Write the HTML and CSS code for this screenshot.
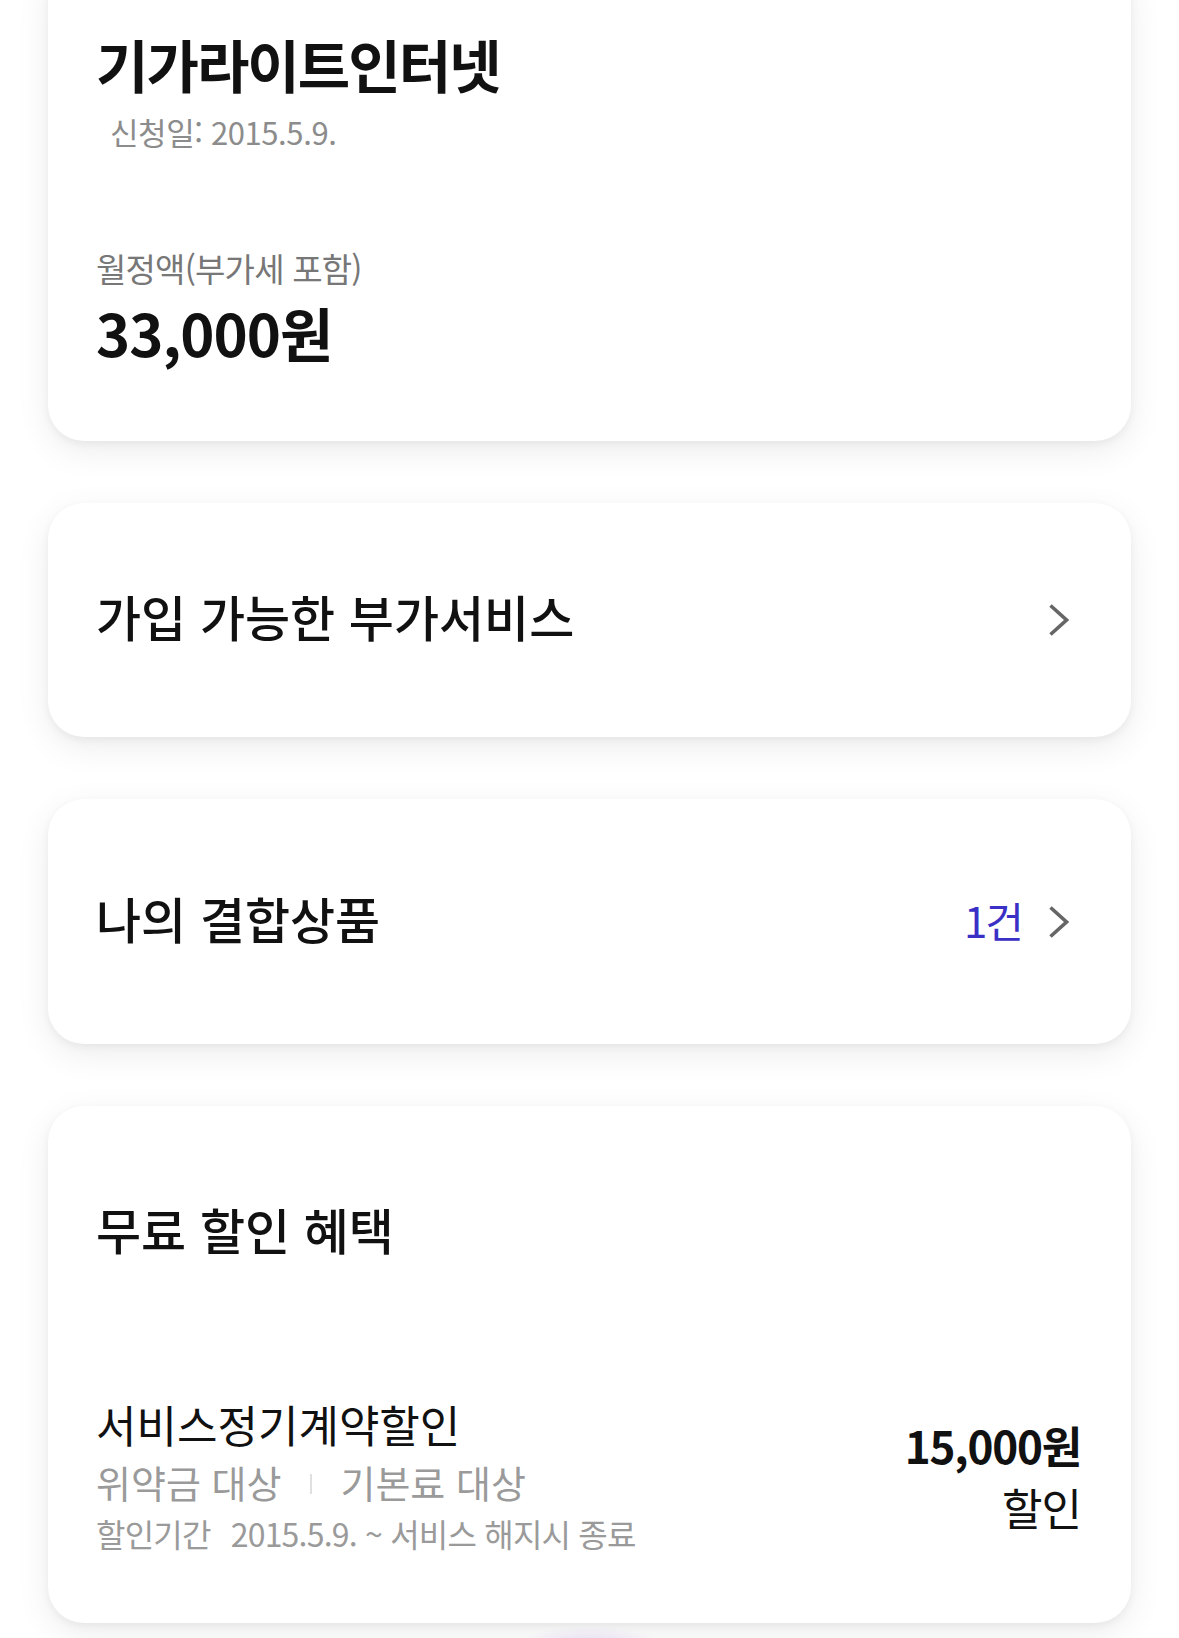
FILE: index.html
```html
<!DOCTYPE html>
<html lang="ko">
<head>
<meta charset="utf-8">
<title>기가라이트인터넷</title>
<link rel="stylesheet" href="styles.css">
</head>
<body>
<main class="page">
  <section class="card card-product">
    <h1 class="product-name">기가라이트인터넷</h1>
    <p class="apply-date">신청일: 2015.5.9.</p>
    <p class="fee-label">월정액(부가세 포함)</p>
    <p class="fee-value">33,000원</p>
  </section>

  <a class="card card-link card-addon" href="#">
    <span class="link-title">가입 가능한 부가서비스</span>
    <span class="link-right">
      <svg class="chevron" viewBox="0 0 20 32" width="20" height="32" aria-hidden="true"><polyline points="1.5,1.5 17.5,16 1.5,30.5" fill="none" stroke="#666" stroke-width="3.6"/></svg>
    </span>
  </a>

  <a class="card card-link card-bundle" href="#">
    <span class="link-title">나의 결합상품</span>
    <span class="link-right">
      <span class="count">1건</span>
      <svg class="chevron" viewBox="0 0 20 32" width="20" height="32" aria-hidden="true"><polyline points="1.5,1.5 17.5,16 1.5,30.5" fill="none" stroke="#666" stroke-width="3.6"/></svg>
    </span>
  </a>

  <section class="card card-benefit">
    <h2 class="benefit-title">무료 할인 혜택</h2>
    <div class="benefit-row">
      <div class="benefit-info">
        <p class="benefit-name">서비스정기계약할인</p>
        <p class="benefit-tags"><span>위약금 대상</span><i class="sep"></i><span>기본료 대상</span></p>
        <p class="benefit-period"><span class="period-label">할인기간</span> 2015.5.9. ~ 서비스 해지시 종료</p>
      </div>
      <div class="benefit-amount">
        <p class="amount-value">15,000원</p>
        <p class="amount-label">할인</p>
      </div>
    </div>
  </section>
  <div class="fab-glow"></div>
</main>
</body>
</html>
```

FILE: styles.css
```css
* { box-sizing: border-box; }
html, body { margin: 0; padding: 0; background: #fff; }
body {
  font-family: "Noto Sans CJK KR", "Noto Sans", sans-serif;
  color: #111;
  overflow: hidden;
}
p, h1, h2 { margin: 0; font-weight: 400; }

.page {
  position: relative;
  padding: 0 48px 60px;
  display: flex;
  flex-direction: column;
  gap: 62px;
}

.card {
  background: #fff;
  border-radius: 36px;
  box-shadow: 0 10px 34px rgba(0, 0, 0, 0.075), 0 3px 8px rgba(0, 0, 0, 0.05);
  text-decoration: none;
  color: #111;
}

/* product card */
.card-product {
  margin-top: -40px;
  padding: 72px 48px 77px 48px;
}
.product-name {
  font-size: 57px;
  line-height: 62px;
  font-weight: 700;
  letter-spacing: -2px;
}
.apply-date {
  margin: 20px 0 0 14px;
  font-size: 31px;
  line-height: 36px;
  color: #8c8c8c;
  letter-spacing: -0.4px;
}
.fee-label {
  margin-top: 98px;
  font-size: 33px;
  line-height: 40px;
  color: #777;
  letter-spacing: -0.8px;
}
.fee-value {
  margin-top: 12px;
  font-size: 58px;
  line-height: 64px;
  font-weight: 700;
  letter-spacing: -1px;
}

/* link cards */
.card-link {
  display: flex;
  align-items: center;
  justify-content: space-between;
  padding: 0 62px 0 48px;
}
.card-addon { height: 234px; }
.card-bundle { height: 245px; }
.link-title {
  font-size: 49px;
  line-height: 58px;
  font-weight: 500;
  margin-bottom: 8px;
}
.link-right {
  display: flex;
  align-items: center;
  gap: 27px;
}
.count {
  font-size: 42px;
  line-height: 50px;
  color: #3a30c6;
  letter-spacing: -2px;
  margin-bottom: 4px;
}
.chevron { display: block; }

/* benefit card */
.card-benefit {
  height: 517px;
  padding: 94px 50px 0 48px;
}
.benefit-title {
  font-size: 49px;
  line-height: 58px;
  font-weight: 500;
}
.benefit-row {
  margin-top: 140px;
  display: flex;
  justify-content: space-between;
  align-items: center;
}
.benefit-name {
  font-size: 44px;
  line-height: 52px;
}
.benefit-tags {
  margin-top: 10px;
  font-size: 38px;
  line-height: 44px;
  color: #9a9a9a;
  display: flex;
  align-items: center;
}
.sep {
  display: inline-block;
  width: 2px;
  height: 20px;
  background: #e0e0e0;
  margin: 4px 28px 0 29px;
}
.benefit-period {
  margin-top: 9px;
  font-size: 32px;
  line-height: 40px;
  color: #9a9a9a;
  letter-spacing: -0.8px;
}
.period-label { margin-right: 12px; }
.benefit-amount {
  text-align: right;
}
.amount-value {
  font-size: 44px;
  line-height: 50px;
  font-weight: 700;
  letter-spacing: -1.2px;
}
.amount-label {
  margin-top: 12px;
  font-size: 44px;
  line-height: 50px;
  letter-spacing: -1px;
}

.fab-glow {
  position: absolute;
  left: 515px;
  top: 1626px;
  width: 150px;
  height: 40px;
  border-radius: 50%;
  background: radial-gradient(ellipse at center, rgba(150, 110, 220, 0.22), rgba(150, 110, 220, 0) 70%);
  pointer-events: none;
}
```
